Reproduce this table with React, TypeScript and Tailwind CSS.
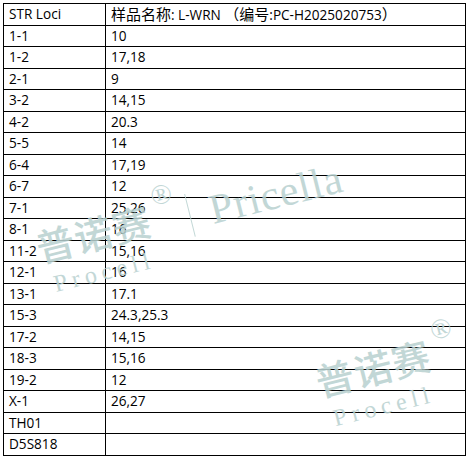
const rows: [string, string][] = [
  ["1-1", "10"],
  ["1-2", "17,18"],
  ["2-1", "9"],
  ["3-2", "14,15"],
  ["4-2", "20.3"],
  ["5-5", "14"],
  ["6-4", "17,19"],
  ["6-7", "12"],
  ["7-1", "25,26"],
  ["8-1", "16"],
  ["11-2", "15,16"],
  ["12-1", "16"],
  ["13-1", "17.1"],
  ["15-3", "24.3,25.3"],
  ["17-2", "14,15"],
  ["18-3", "15,16"],
  ["19-2", "12"],
  ["X-1", "26,27"],
  ["TH01", ""],
  ["D5S818", ""],
];

const Row = ({ locus, value }: { locus: string; value: React.ReactNode }) => (
  <div className="grid grid-cols-[102px_1fr] h-[21.5px]">
    <div className="border-r border-b border-black pl-[5px] leading-[20px]">{locus}</div>
    <div className="border-r border-b border-black pl-[5px] leading-[20px] whitespace-nowrap">{value}</div>
  </div>
);

// 普诺赛® / Procell stamp
const Stamp = () => (
  <div className="flex flex-col items-start w-[150px]">
    <div className="flex items-start">
      <span className="font-['Noto_Sans_CJK_SC',sans-serif] font-medium text-[38px] leading-none tracking-[1px]">普诺赛</span>
      <span className="font-['Liberation_Serif',serif] text-[28px] leading-none -mt-[16px] ml-[6px]">®</span>
    </div>
    <span className="font-['Liberation_Serif',serif] text-[24px] leading-none tracking-[5px] mt-[9px] ml-[8px]">
      Procell
    </span>
  </div>
);

export default function App() {
  return (
    <div className="relative w-[469px] h-[457px] bg-white overflow-hidden">
      <div className="ml-[3px] mt-[3px] w-[463px] border-l border-t border-black text-[13.6px] font-medium text-black font-['Open_Sans',Arial,sans-serif]">
        <Row
          locus="STR Loci"
          value={
            <>
              <span className="font-['Noto_Sans_CJK_SC',sans-serif] font-normal text-[15px]">样品名称</span>: L-WRN{" "}
              <span className="font-['Noto_Sans_CJK_SC',sans-serif] font-normal text-[15px] [text-spacing-trim:space-all]">（编号</span>
              :PC-H2025020753
              <span className="font-['Noto_Sans_CJK_SC',sans-serif] font-normal text-[15px] [text-spacing-trim:space-all]">）</span>
            </>
          }
        />
        {rows.map(([locus, value]) => (
          <Row key={locus} locus={locus} value={value} />
        ))}
      </div>

      {/* watermarks over the table */}
      <div className="pointer-events-none absolute left-[36px] top-[190px] -rotate-[14deg] flex items-start text-[#b8d1d0] opacity-85">
        <Stamp />
        <div className="w-px h-[44px] bg-[#b8d1d0] mt-[3px] ml-[6px]" />
        <span className="font-['Liberation_Serif',serif] text-[42px] leading-none tracking-[1px] mt-[4px] ml-[20px]">
          Pricella
        </span>
      </div>
      <div className="pointer-events-none absolute left-[318px] top-[344px] -rotate-[14deg] text-[#b8d1d0] opacity-85">
        <Stamp />
      </div>
    </div>
  );
}
